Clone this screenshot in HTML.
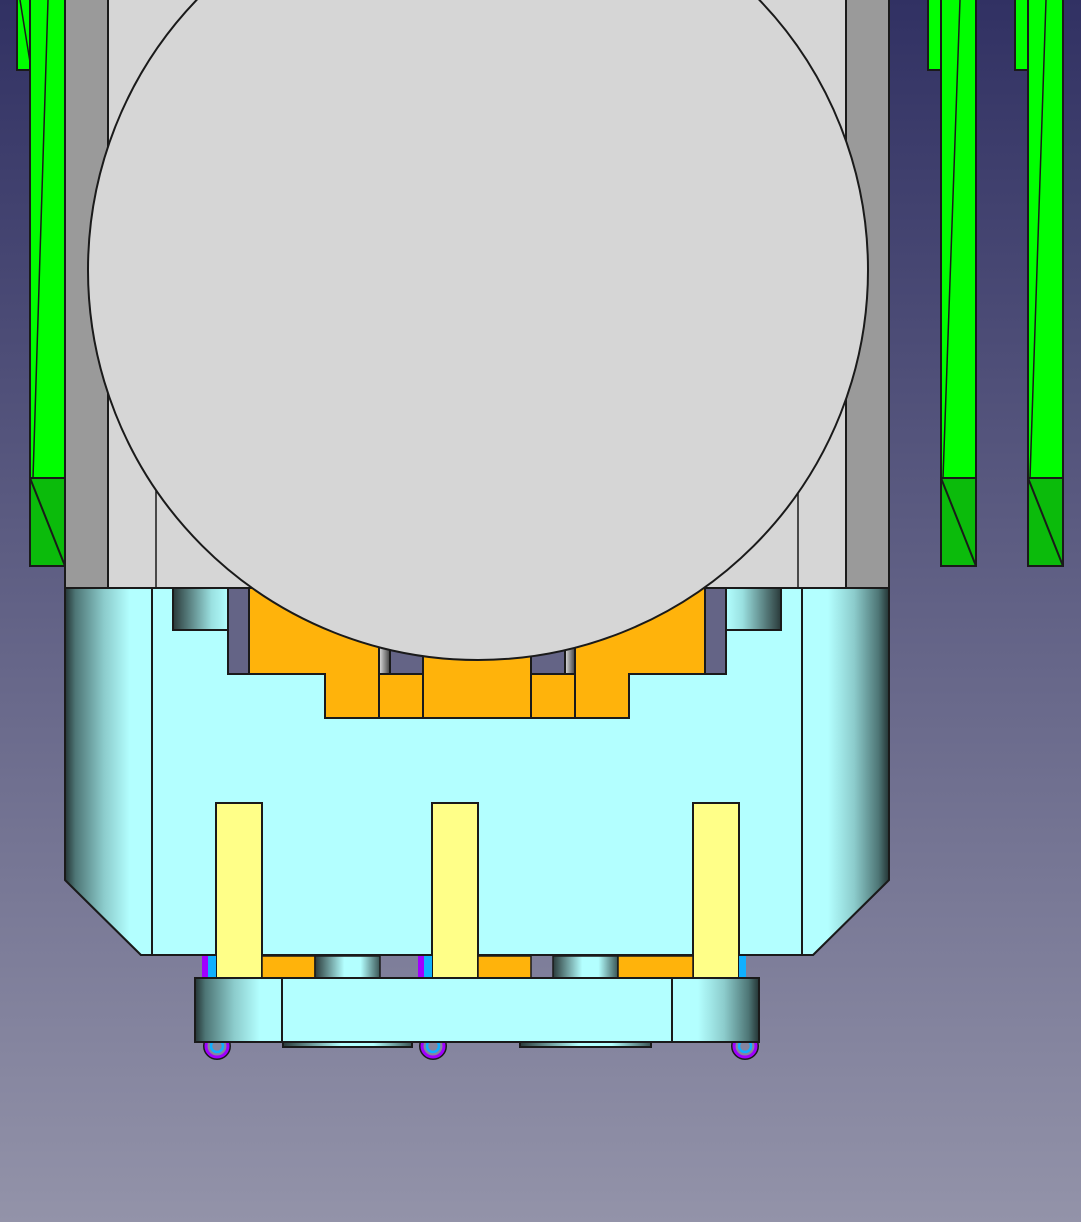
<!DOCTYPE html>
<html><head><meta charset="utf-8"><style>html,body{margin:0;padding:0;width:1081px;height:1222px;overflow:hidden}svg{display:block}</style></head>
<body>
<svg width="1081" height="1222" viewBox="0 0 1081 1222" xmlns="http://www.w3.org/2000/svg">
<defs>
<linearGradient id="bg" x1="0" y1="0" x2="0" y2="1">
<stop offset="0" stop-color="#313163"/><stop offset="1" stop-color="#9393a9"/></linearGradient>
<linearGradient id="cl" x1="0" y1="0" x2="1" y2="0">
<stop offset="0" stop-color="#243434"/><stop offset="0.12" stop-color="#4e7676"/><stop offset="0.45" stop-color="#8ccccc"/><stop offset="0.75" stop-color="#b3ffff"/><stop offset="1" stop-color="#b3ffff"/></linearGradient>
<linearGradient id="cr" x1="0" y1="0" x2="1" y2="0">
<stop offset="0" stop-color="#b3ffff"/><stop offset="0.3" stop-color="#b3ffff"/><stop offset="0.6" stop-color="#8ccccc"/><stop offset="0.88" stop-color="#4e7676"/><stop offset="1" stop-color="#243434"/></linearGradient>
<linearGradient id="cyl" x1="0" y1="0" x2="1" y2="0">
<stop offset="0" stop-color="#2a3a3a"/><stop offset="0.45" stop-color="#b3ffff"/><stop offset="0.7" stop-color="#b3ffff"/><stop offset="1" stop-color="#3a5555"/></linearGradient>
<linearGradient id="cyl2" x1="0" y1="0" x2="1" y2="0">
<stop offset="0" stop-color="#2a3a3a"/><stop offset="0.7" stop-color="#9ae0e0"/><stop offset="1" stop-color="#b3ffff"/></linearGradient>
<linearGradient id="cyl3" x1="0" y1="0" x2="1" y2="0">
<stop offset="0" stop-color="#b3ffff"/><stop offset="0.3" stop-color="#9ae0e0"/><stop offset="1" stop-color="#2a3a3a"/></linearGradient>
<linearGradient id="gc" x1="0" y1="0" x2="1" y2="0">
<stop offset="0" stop-color="#e0e0e0"/><stop offset="1" stop-color="#404040"/></linearGradient>
</defs>
<rect width="1081" height="1222" fill="url(#bg)"/>
<g stroke="#1a1a1a" stroke-width="2">
<rect x="17" y="-2" width="13" height="72" fill="#00ff00"/>
<rect x="30" y="-2" width="35" height="480" fill="#00ff00"/>
<rect x="30" y="478" width="35" height="88" fill="#0bbb0b"/>
<line x1="30" y1="478" x2="65" y2="566"/>
<line x1="48" y1="0" x2="33" y2="478" stroke-width="1.5"/>
<line x1="20" y1="0" x2="30" y2="62" stroke-width="1.5"/>
<rect x="928" y="-2" width="13" height="72" fill="#00ff00"/>
<rect x="941" y="-2" width="35" height="480" fill="#00ff00"/>
<rect x="941" y="478" width="35" height="88" fill="#0bbb0b"/>
<line x1="941" y1="478" x2="976" y2="566"/>
<line x1="960" y1="0" x2="943" y2="478" stroke-width="1.5"/>
<rect x="1015" y="-2" width="13" height="72" fill="#00ff00"/>
<rect x="1028" y="-2" width="35" height="480" fill="#00ff00"/>
<rect x="1028" y="478" width="35" height="88" fill="#0bbb0b"/>
<line x1="1028" y1="478" x2="1063" y2="566"/>
<line x1="1046" y1="0" x2="1030" y2="478" stroke-width="1.5"/>
<rect x="65" y="-2" width="824" height="590" fill="#d6d6d6"/>
<rect x="65" y="-2" width="43" height="590" fill="#9a9a9a"/>
<rect x="846" y="-2" width="43" height="590" fill="#9a9a9a"/>
<line x1="156" y1="480" x2="156" y2="588" stroke-width="1.5"/>
<line x1="798" y1="480" x2="798" y2="588" stroke-width="1.5"/>
<polygon points="65,588 889,588 889,880 813,955 141,955 65,880" fill="#b3ffff"/>
<polygon points="65,588 152,588 152,955 141,955 65,880" fill="url(#cl)"/>
<polygon points="802,588 889,588 889,880 813,955 802,955" fill="url(#cr)"/>
<rect x="173" y="588" width="55" height="42" fill="url(#cyl2)"/>
<rect x="726" y="588" width="55" height="42" fill="url(#cyl3)"/>
<rect x="228" y="588" width="21" height="86" fill="#646486"/>
<rect x="705" y="588" width="21" height="86" fill="#646486"/>
<rect x="379" y="620" width="11" height="54" fill="url(#gc)"/>
<rect x="390" y="620" width="33" height="54" fill="#646486"/>
<rect x="531" y="620" width="34" height="54" fill="#646486"/>
<rect x="565" y="620" width="10" height="54" fill="url(#gc)"/>
<polygon points="249,588 379,588 379,674 379,718 325,718 325,674 249,674" fill="#ffb30b"/>
<polygon points="575,588 705,588 705,674 629,674 629,718 575,718" fill="#ffb30b"/>
<rect x="379" y="674" width="44" height="44" fill="#ffb30b"/>
<rect x="531" y="674" width="44" height="44" fill="#ffb30b"/>
<rect x="423" y="630" width="108" height="88" fill="#ffb30b"/>
<circle cx="478" cy="270" r="390" fill="#d6d6d6"/>
<rect x="216" y="803" width="46" height="175" fill="#ffff88"/>
<rect x="432" y="803" width="46" height="175" fill="#ffff88"/>
<rect x="693" y="803" width="46" height="175" fill="#ffff88"/>
</g>
<rect x="262" y="956" width="53" height="22" fill="#ffb30b" stroke="#1a1a1a" stroke-width="1.5"/>
<rect x="315" y="956" width="65" height="22" fill="url(#cyl)" stroke="#1a1a1a" stroke-width="1.5"/>
<rect x="478" y="956" width="53" height="22" fill="#ffb30b" stroke="#1a1a1a" stroke-width="1.5"/>
<rect x="553" y="956" width="65" height="22" fill="url(#cyl)" stroke="#1a1a1a" stroke-width="1.5"/>
<rect x="618" y="956" width="75" height="22" fill="#ffb30b" stroke="#1a1a1a" stroke-width="1.5"/>
<rect x="202" y="956" width="6" height="22" fill="#a000ff"/>
<rect x="208" y="956" width="8" height="22" fill="#10b0ff"/>
<rect x="418" y="956" width="6" height="22" fill="#a000ff"/>
<rect x="424" y="956" width="8" height="22" fill="#10b0ff"/>
<rect x="739" y="956" width="7" height="22" fill="#10b0ff"/>
<g fill="none">
<circle cx="217" cy="1046" r="13" stroke="#1a1a1a" stroke-width="2"/><circle cx="217" cy="1046" r="11" stroke="#a000ff" stroke-width="3"/><circle cx="217" cy="1046" r="6" stroke="#10b0ff" stroke-width="2.5"/>
<circle cx="433" cy="1046" r="13" stroke="#1a1a1a" stroke-width="2"/><circle cx="433" cy="1046" r="11" stroke="#a000ff" stroke-width="3"/><circle cx="433" cy="1046" r="6" stroke="#10b0ff" stroke-width="2.5"/>
<circle cx="745" cy="1046" r="13" stroke="#1a1a1a" stroke-width="2"/><circle cx="745" cy="1046" r="11" stroke="#a000ff" stroke-width="3"/><circle cx="745" cy="1046" r="6" stroke="#10b0ff" stroke-width="2.5"/>
</g>
<g stroke="#1a1a1a" stroke-width="2">
<rect x="283" y="1040" width="129" height="7" fill="url(#cyl)"/>
<rect x="520" y="1040" width="131" height="7" fill="url(#cyl)"/>
<rect x="195" y="978" width="564" height="64" fill="#b3ffff"/>
<rect x="195" y="978" width="87" height="64" fill="url(#cl)"/>
<rect x="672" y="978" width="87" height="64" fill="url(#cr)"/>
</g>
</svg>
</body></html>
